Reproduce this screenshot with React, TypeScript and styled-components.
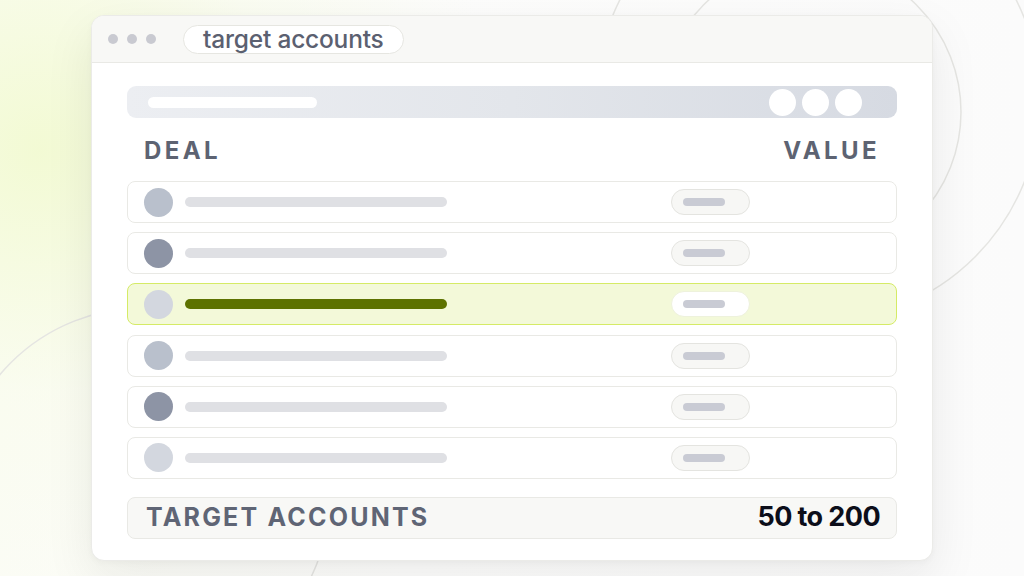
import React, {FC} from 'react';
import styled, {createGlobalStyle} from 'styled-components';

const GlobalStyle = createGlobalStyle`
  html, body {
    margin: 0;
    padding: 0;
  }

  body {
    font-family: Inter, "Noto Sans", "Liberation Sans", sans-serif;
    -webkit-font-smoothing: antialiased;
  }
`;

const Page = styled.div`
  position: relative;
  width: 1024px;
  height: 576px;
  overflow: hidden;
  box-sizing: border-box;
  padding: 15px 0 0 91px;
  background: radial-gradient(ellipse 460px 440px at 40px 150px, rgba(242, 250, 210, 0.95), rgba(249, 252, 236, 0.6) 55%, rgba(253, 253, 252, 0) 100%),
  linear-gradient(90deg, #fbfcf5 0%, #fdfdfc 40%, #fbfbfb 100%);
`;

const Backdrop = styled.svg`
  position: absolute;
  inset: 0;
  pointer-events: none;
`;

const Window = styled.div`
  position: relative;
  width: 842px;
  height: 546px;
  box-sizing: border-box;
  background: #ffffff;
  border: 1px solid #ebebe8;
  border-radius: 13px;
  overflow: hidden;
  box-shadow: 0 18px 50px rgba(20, 20, 30, 0.08), 0 2px 6px rgba(20, 20, 30, 0.03);
  display: flex;
  flex-direction: column;
`;

const TitleBar = styled.div`
  height: 46px;
  flex-shrink: 0;
  display: flex;
  align-items: center;
  padding-left: 16px;
  background: #f8f8f6;
  border-bottom: 1px solid #e9e9e5;
`;

const Dots = styled.div`
  display: flex;
  gap: 9px;
  margin-right: 27px;
`;

const Dot = styled.span`
  width: 10px;
  height: 10px;
  border-radius: 50%;
  background: #c9cad1;
`;

const AddressPill = styled.div`
  height: 29px;
  box-sizing: border-box;
  padding: 0 19px;
  display: flex;
  align-items: center;
  background: #ffffff;
  border: 1.5px solid #e6e6e1;
  border-radius: 15px;
  font-size: 24.5px;
  font-weight: 500;
  letter-spacing: -0.2px;
  color: #5b6070;
`;

const Body = styled.div`
  flex: 1;
  display: flex;
  flex-direction: column;
  padding: 23px 35px 0;
`;

const SearchBar = styled.div`
  height: 32px;
  border-radius: 9px;
  display: flex;
  align-items: center;
  padding: 0 35px 0 21px;
  background: linear-gradient(90deg, #eceef2 0%, #e3e6eb 50%, #d6dae2 100%);
`;

const SearchLine = styled.span`
  width: 169px;
  height: 11px;
  border-radius: 6px;
  background: #ffffff;
`;

const SearchButtons = styled.div`
  margin-left: auto;
  display: flex;
  gap: 6px;
`;

const SearchButton = styled.span`
  width: 27px;
  height: 27px;
  border-radius: 50%;
  background: #ffffff;
`;

const HeaderRow = styled.div`
  display: flex;
  justify-content: space-between;
  margin: 21px 0 18px;
  padding: 0 17px 0 17px;
  font-size: 24px;
  line-height: 24px;
  font-weight: 700;
  letter-spacing: 3.4px;
  color: #5d6372;
`;

const List = styled.div`
  display: flex;
  flex-direction: column;
  gap: 9.2px;
`;

const Row = styled.div<{ $active?: boolean }>`
  height: 42px;
  box-sizing: border-box;
  display: flex;
  align-items: center;
  padding: 0 146px 0 16px;
  border-radius: 8px;
  border: 1.5px solid ${p => (p.$active ? '#d5eb66' : '#e9e9e5')};
  background: ${p => (p.$active ? '#f3f9d9' : '#ffffff')};
`;

const Avatar = styled.span<{ $tone: string }>`
  width: 29px;
  height: 29px;
  border-radius: 50%;
  flex-shrink: 0;
  background: ${p => p.$tone};
`;

const NameBar = styled.span<{ $active?: boolean }>`
  width: 262px;
  height: 10px;
  margin-left: 12px;
  border-radius: 5px;
  background: ${p => (p.$active ? '#5d7200' : '#dfe0e4')};
`;

const ValuePill = styled.span<{ $active?: boolean }>`
  margin-left: auto;
  width: 79px;
  height: 26px;
  box-sizing: border-box;
  display: flex;
  align-items: center;
  padding-left: 11px;
  border-radius: 13px;
  border: 1.5px solid ${p => (p.$active ? '#eef2dc' : '#e4e4e0')};
  background: ${p => (p.$active ? '#ffffff' : '#f7f7f5')};
`;

const ValueBar = styled.span`
  width: 42px;
  height: 8px;
  border-radius: 4px;
  background: #c9cbd4;
`;

const Footer = styled.div`
  margin-top: 18px;
  height: 42px;
  box-sizing: border-box;
  display: flex;
  align-items: center;
  justify-content: space-between;
  padding: 0 16px 2px 18px;
  border-radius: 8px;
  border: 1.5px solid #e9e9e5;
  background: #f8f8f6;
`;

const FooterLabel = styled.span`
  font-size: 25px;
  font-weight: 700;
  letter-spacing: 2.2px;
  color: #5f6575;
`;

const FooterValue = styled.span`
  font-size: 27px;
  font-weight: 700;
  letter-spacing: -0.6px;
  color: #0c0e1a;
`;

const rows = [
  {tone: '#b9c0cc'},
  {tone: '#8d94a5'},
  {tone: '#d3d7df', active: true},
  {tone: '#b9c0cc'},
  {tone: '#8d94a5'},
  {tone: '#d3d7df'},
];

const App: FC = () => {
  return (
    <Page>
      <GlobalStyle/>
      <Backdrop width="1024" height="576" viewBox="0 0 1024 576">
        <g fill="none" stroke="#e5e5e2" strokeWidth="1.5">
          <circle cx="810" cy="112" r="151"/>
          <circle cx="818" cy="100" r="222"/>
          <circle cx="143" cy="495" r="187"/>
        </g>
      </Backdrop>
      <Window>
        <TitleBar>
          <Dots>
            <Dot/>
            <Dot/>
            <Dot/>
          </Dots>
          <AddressPill>target accounts</AddressPill>
        </TitleBar>
        <Body>
          <SearchBar>
            <SearchLine/>
            <SearchButtons>
              <SearchButton/>
              <SearchButton/>
              <SearchButton/>
            </SearchButtons>
          </SearchBar>
          <HeaderRow>
            <span>DEAL</span>
            <span>VALUE</span>
          </HeaderRow>
          <List>
            {rows.map((r, i) => (
              <Row key={i} $active={r.active}>
                <Avatar $tone={r.tone}/>
                <NameBar $active={r.active}/>
                <ValuePill $active={r.active}>
                  <ValueBar/>
                </ValuePill>
              </Row>
            ))}
          </List>
          <Footer>
            <FooterLabel>TARGET ACCOUNTS</FooterLabel>
            <FooterValue>50 to 200</FooterValue>
          </Footer>
        </Body>
      </Window>
    </Page>
  );
};

export default App;
